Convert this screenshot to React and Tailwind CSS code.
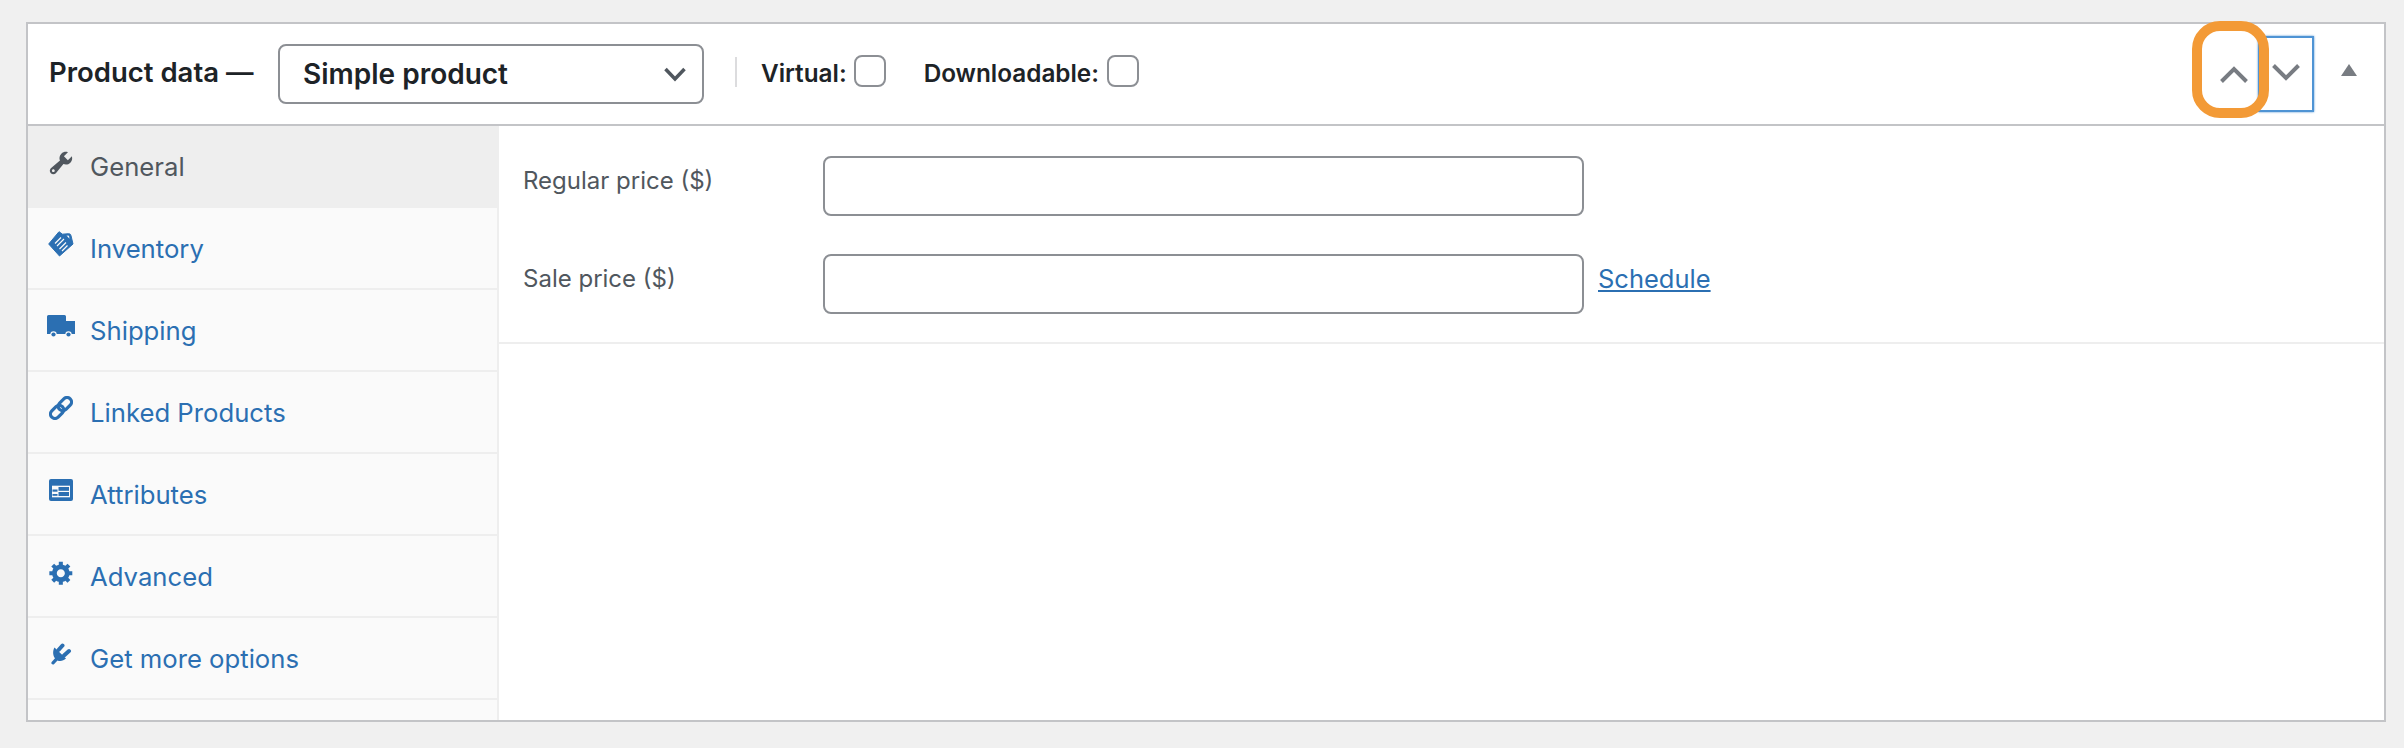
import React from "react";

const blue = "#2b6fb2";

function Wrench() {
  return (
    <svg width="28" height="28" viewBox="0 0 20 20" className="shrink-0">
      <path fill="#50575e" fillRule="evenodd" d="M16.68 9.770c-1.340 1.340-3.300 1.670-4.950.990l-5.410 6.520c-.990.990-2.590.990-3.580 0s-.990-2.590 0-3.570l6.520-5.420c-.680-1.650-.350-3.610.990-4.950 1.280-1.280 3.120-1.620 4.720-1.060l-2.890 2.890 2.820 2.820 2.860-2.870c.530 1.580.180 3.390-1.080 4.650zM3.810 16.210c.400.390 1.040.390 1.430 0 .400-.400.400-1.040 0-1.430-.390-.400-1.030-.400-1.430 0-.390.390-.390 1.030 0 1.430z" />
    </svg>
  );
}
function Tag() {
  return (
    <svg width="26" height="26" viewBox="0 0 26 26" className="shrink-0">
      <path fill={blue} strokeLinejoin="round" stroke={blue} strokeWidth="1" d="M.700 13 11 .700l3.500 2.500 6-.500c1.500-.100 2.300.700 2.500 2L25 13 11.500 25z" />
      <path stroke="#fafafa" strokeWidth="1.200" fill="none" d="M7 12.500l6-6M9 15l7-7M11.500 18l6.500-6.500M14 20l5.500-5.500" />
      <path fill="#fafafa" d="M18.500 4.500l2.500.200.500 3z" />
    </svg>
  );
}
function Truck() {
  return (
    <svg width="28" height="22" viewBox="0 0 28 22" className="shrink-0">
      <path fill={blue} d="M1.500 0H17.500a1.500 1.500 0 0 1 1.500 1.500V6H28V19H0V1.500A1.500 1.500 0 0 1 1.500 0z" />
      <circle cx="6.500" cy="19.500" r="3.200" fill="#fafafa" />
      <circle cx="6.500" cy="19.500" r="2.100" fill={blue} />
      <circle cx="21.500" cy="19.500" r="3.200" fill="#fafafa" />
      <circle cx="21.500" cy="19.500" r="2.100" fill={blue} />
    </svg>
  );
}
function LinkIcon() {
  return (
    <svg width="24" height="24" viewBox="0 0 24 24" className="shrink-0">
      <g fill="none" stroke={blue} strokeWidth="3.200" transform="rotate(-45 12 12)">
        <rect x="-1" y="7.500" width="15" height="9" rx="4.500" />
        <rect x="10" y="7.500" width="15" height="9" rx="4.500" />
      </g>
    </svg>
  );
}
function Attr() {
  return (
    <svg width="24" height="22" viewBox="0 0 24 22" className="shrink-0">
      <rect width="24" height="22" rx="2" fill={blue} />
      <rect x="3" y="6.700" width="18" height="11.600" fill="#fafafa" />
      <rect x="9.500" y="8" width="10.500" height="3.800" fill={blue} />
      <rect x="9.500" y="13" width="10.500" height="4" fill={blue} />
      <rect x="3.500" y="10.500" width="5" height="2.200" fill={blue} />
      <rect x="3.500" y="15" width="5" height="1.800" fill={blue} />
    </svg>
  );
}
function Gear() {
  return (
    <svg width="27" height="27" viewBox="0 0 20 20" className="shrink-0">
      <path fill={blue} fillRule="evenodd" d="M18 12h-2.180c-.170.700-.440 1.350-.810 1.930l1.540 1.540-2.100 2.100-1.540-1.540c-.580.360-1.230.630-1.910.790V19H8v-2.180c-.680-.160-1.330-.430-1.910-.790l-1.540 1.540-2.120-2.120 1.540-1.540c-.360-.580-.630-1.230-.790-1.910H1V9.030h2.170c.160-.700.440-1.350.800-1.940L2.430 5.550l2.100-2.100 1.540 1.540c.580-.370 1.240-.640 1.930-.810V2h3v2.180c.680.160 1.330.430 1.910.790l1.540-1.540 2.120 2.120-1.540 1.540c.360.580.630 1.230.790 1.910H18V12zm-8.500 1.500c1.660 0 3-1.340 3-3s-1.340-3-3-3-3 1.340-3 3 1.340 3 3 3z" />
    </svg>
  );
}
function Plug() {
  return (
    <svg width="21" height="22" viewBox="0 0 21 22" className="shrink-0">
      <path fill={blue} d="M3.500 4.500 15 15.500c-2.500 2.500-6 3-8.500 1.900l-3.300 3.500c-.700.700-1.800.700-2.400.100-.600-.600-.600-1.600.100-2.300L4 15.300C1.800 12.500 1.500 8 3.500 4.500z" />
      <path stroke={blue} strokeWidth="4" strokeLinecap="round" d="M7.500 7 11.500 2.500M13 12.500l5-4.500" />
    </svg>
  );
}

const tabs = [
  ["General", <Wrench />, true],
  ["Inventory", <Tag />],
  ["Shipping", <Truck />],
  ["Linked Products", <LinkIcon />],
  ["Attributes", <Attr />],
  ["Advanced", <Gear />],
  ["Get more options", <Plug />],
];

function Tab({ label, icon, active }) {
  return (
    <div
      className={
        active
          ? "h-[82px] flex items-center bg-[#eeeeee] text-[#50575e]"
          : "h-[82px] flex items-center bg-[#fafafa] text-[#2b6fb2] border-b-2 border-[#eeeeee]"
      }
    >
      <span className="w-[62px] shrink-0 pl-[20px] pr-[16px] flex items-center justify-center -translate-y-[4px]">{icon}</span>
      <span className={active ? "text-[25.7px]" : "text-[25.7px] pt-[2px]"}>{label}</span>
    </div>
  );
}

function Chevron({ up }) {
  return (
    <svg width="28" height="17" viewBox="0 0 28 17">
      <path
        fill="none"
        stroke="#787c82"
        strokeWidth="4"
        d={up ? "M1.500 15.500 14 3 26.500 15.500" : "M1.500 1.500 14 14 26.500 1.500"}
      />
    </svg>
  );
}

function Field({ label, children }) {
  return (
    <div className="flex items-start h-[60px]">
      <div className="w-[324px] shrink-0 pl-[24px] pt-[7px] text-[#50575e]">{label}</div>
      <div className="w-[761px] h-[60px] shrink-0 rounded-lg border-2 border-[#8c8f94] bg-white" />
      {children}
    </div>
  );
}

export default function App() {
  return (
    <div className="w-[2404px] h-[748px] bg-[#f0f0f0] pt-[22px] pl-[26px] text-[24px] leading-[36px] font-['Inter',sans-serif]">
      <div className="relative w-[2360px] h-[700px] flex flex-col border-2 border-[#c3c4c7] bg-white">
        <div className="h-[102px] shrink-0 flex items-center border-b-2 border-[#c3c4c7] pl-[21px]">
          <span className="w-[229px] shrink-0 text-[27.5px] font-semibold text-[#1d2327] -translate-y-[2px]">Product data —</span>
          <div className="w-[426px] h-[60px] shrink-0 flex items-center justify-between rounded-lg border-2 border-[#8c8f94] pl-[23px] pr-[16px] text-[28px] font-semibold text-[#1d2327]">
            Simple product
            <svg width="22" height="15" viewBox="0 0 22 15">
              <path fill="none" stroke="#50575e" strokeWidth="3.500" d="M1.500 2 11 12 20.500 2" />
            </svg>
          </div>
          <div className="ml-[31px] w-[2px] h-[30px] bg-[#dcdcde] -translate-y-[2px]" />
          <span className="ml-[24px] text-[24.3px] font-semibold text-[#1d2327] -translate-y-[1px]">Virtual:</span>
          <span className="ml-[7px] w-[32px] h-[32px] rounded-lg border-2 border-[#8c8f94] bg-white -translate-y-[3px]" />
          <span className="ml-[38px] text-[24.3px] font-semibold text-[#1d2327] -translate-y-[1px]">Downloadable:</span>
          <span className="ml-[8px] w-[32px] h-[32px] rounded-lg border-2 border-[#8c8f94] bg-white -translate-y-[3px]" />
          <div className="ml-auto flex items-center">
            <div className="w-[56px] h-[76px] flex items-center justify-center pl-[8px]">
              <Chevron up />
            </div>
            <div className="w-[56px] h-[76px] flex items-center justify-center border-2 border-[#4f94d4] shadow-[0_0_2px_#4f94d4] pb-[3px]">
              <Chevron />
            </div>
            <div className="w-[70px] h-[76px] flex items-center justify-center pb-[8px]">
              <div className="w-0 h-0 border-x-[8px] border-x-transparent border-b-[12px] border-b-[#787c82]" />
            </div>
          </div>
        </div>
        <div className="flex-1 flex min-h-0">
          <div className="w-[471px] shrink-0 flex flex-col bg-[#fafafa] border-r-2 border-[#eeeeee]">
            {tabs.map(([label, icon, active]) => (
              <Tab key={label} label={label} icon={icon} active={active} />
            ))}
          </div>
          <div className="flex-1">
            <div className="h-[218px] flex flex-col gap-[38px] pt-[30px] border-b-2 border-[#eeeeee]">
              <Field label="Regular price ($)" />
              <Field label="Sale price ($)">
                <a className="ml-[14px] pt-[7px] text-[25.5px] text-[#2b6fb2] underline">Schedule</a>
              </Field>
            </div>
          </div>
        </div>
        <div className="absolute left-[2164px] top-[-3px] w-[77px] h-[97px] rounded-[28px] border-[10px] border-[#f39a36]" />
      </div>
    </div>
  );
}
